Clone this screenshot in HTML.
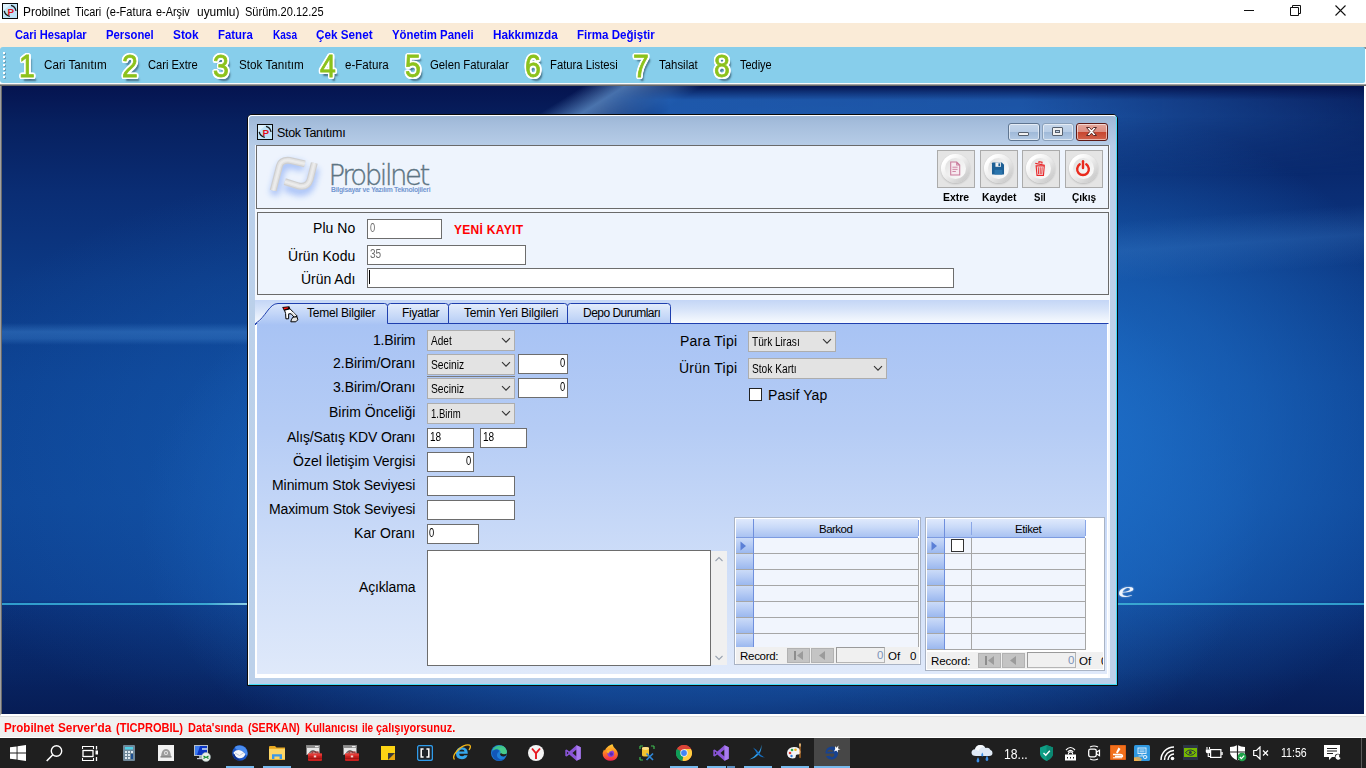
<!DOCTYPE html>
<html lang="tr"><head><meta charset="utf-8"><title>Probilnet Ticari</title>
<style>
*{box-sizing:border-box;margin:0;padding:0}
html,body{width:1366px;height:768px;overflow:hidden;background:#0d3f8f;font-family:"Liberation Sans",sans-serif;}
body{position:relative}
.a{position:absolute}
.t{position:absolute;white-space:nowrap;line-height:normal;font-family:"Liberation Sans",sans-serif}
#titlebar{left:0;top:0;width:1366px;height:23px;background:#fff}
#menubar{left:0;top:23px;width:1366px;height:24px;background:#faebd7}
#toolbar{left:0;top:47px;width:1365px;height:36px;background:#87ceeb;border-radius:3px 2px 2px 3px}
#tbbg2{left:1356px;top:47px;width:10px;height:36px;background:linear-gradient(#8c8c8c 0,#8c8c8c 2px,#fff 2px)}
#tbunder{z-index:2;left:0;top:83px;width:1366px;height:3px;background:linear-gradient(#fbfbfb 0,#fbfbfb 1px,#a0a0a0 1px,#a0a0a0 2px,#696969 2px)}
#tbbg{left:0;top:47px;width:10px;height:36px;background:linear-gradient(#faebd7 50%,#fff 50%)}
#mdi{left:0;top:83px;width:1366px;height:633px;overflow:hidden;border:1px solid #a0a0a0;border-top:0;border-right:2px solid #fff;border-bottom:2px solid #fff;
 background:
 radial-gradient(ellipse 400px 330px at 1050px 350px, rgba(30,112,202,.95), rgba(30,112,202,.55) 50%, rgba(30,112,202,0) 100%),
 radial-gradient(ellipse 560px 330px at 700px 440px, rgba(28,102,192,.95), rgba(28,102,192,.8) 55%, rgba(28,102,192,0) 100%),
 radial-gradient(ellipse 520px 300px at 420px 380px, rgba(22,92,178,.8), rgba(22,92,178,0) 100%),
 linear-gradient(180deg,#051450 0,#051450 3px,#07205f 40px,#0a2d74 110px,#0c3a86 200px,#0d4292 300px,#0e4596 420px,#0d3f8e 517px,#0b347e 520px,#092a6c 580px,#08225c 632px)}
#statusbar{left:0;top:716px;width:1366px;height:22px;background:#f0f0f0;border-top:1px solid #dcdcdc;border-bottom:1px solid #fff}
#taskbar{left:0;top:738px;width:1366px;height:30px;background:#1f1f1f}
.num{position:absolute;font-weight:normal;font-size:31.5px;line-height:36px;top:48px;transform:scaleX(.9);color:#8cc21c;width:24px;text-align:center;
 -webkit-text-stroke:.8px #8cc21c;
 text-shadow:-2px 0 #fff,2px 0 #fff,0 -2px #fff,0 2px #fff,-1.5px -1.5px #fff,1.5px -1.5px #fff,-1.5px 1.5px #fff,1.5px 1.5px #fff,-2px 1px #fff,2px 1px #fff,-2px -1px #fff,2px -1px #fff,1px 2px #fff,-1px 2px #fff,1px -2px #fff,-1px -2px #fff,3px 4px 2px rgba(40,70,90,.7)}
/* inner window */
#win{left:247px;top:114px;width:871px;height:572px;border:1px solid #0a0a0a;border-radius:5px 5px 0 0;
 background:linear-gradient(180deg,#9cb6d6 0,#a8c0de 12px,#b6cce7 30px,#bbd0ea 60px,#bcd1ea 100%)}
#win .inner{position:absolute;left:0;top:0;right:0;bottom:0;border:1px solid #fff;border-right-color:#45dcf6;border-bottom-color:#45dcf6;border-radius:4px 4px 0 0}
#client{left:255px;top:145px;width:855px;height:533px;background:#f4f8fe}
.cap{position:absolute;top:123px;width:32px;height:18px;border:1px solid #5f7590;border-radius:3px;
 background:linear-gradient(180deg,#c5d6ea 0,#b9cde6 48%,#9fb9d8 52%,#b4cae4 100%);box-shadow:inset 0 0 0 1px rgba(255,255,255,.55)}
.cap.close{border-color:#5e1a16;background:linear-gradient(180deg,#e5a79c 0,#dc8f83 48%,#c7452f 52%,#d2634c 100%)}
.panel{position:absolute;border:1px solid #6a6a6a;background:#eef4fd}
.tb{position:absolute;background:#fff;border:1px solid #6d6d6d;box-shadow:inset 0 0 0 0 #000}
.cb{position:absolute;background:#e3e3e3;border:1px solid #adadad;}
.cb svg{position:absolute;right:3px;top:6px}
.ibtn{position:absolute;top:150px;width:38px;height:38px;background:#e4e4e4;border:1px solid #ababab}
.ibtn .c{position:absolute;left:3px;top:3px;width:29px;height:29px;border-radius:50%;
 background:linear-gradient(135deg,#fff 18%,#ececec 50%,#c6c6c6 92%);box-shadow:0 1px 2px rgba(0,0,0,.18)}
.ibtn .c::after{content:"";position:absolute;left:4px;top:4px;width:21px;height:21px;border-radius:50%;
 background:linear-gradient(135deg,#dedede 5%,#efefef 45%,#fbfbfb 95%)}
.ibtn svg{position:absolute;left:-1px;top:0}
.grid{position:absolute;background:#fff;border:1px solid #a9b3c4}

</style></head>
<body>
<div class="a" id="titlebar"></div>
<svg class="a" style="left:2px;top:3px" width="16" height="16" viewBox="0 0 16 16"><rect x="0.500" y="0.500" width="15" height="15" fill="#bfe3f7" stroke="#0a0a0a"/><path d="M1 1 H9 L1 8z" fill="#e6f4fc" opacity=".8"/><path d="M2.300 7.800 Q2.800 11.800 7.800 13.300" fill="none" stroke="#1a1a1a" stroke-width="1.300"/><path d="M9 2.300 Q13.300 3.200 14 8" fill="none" stroke="#1a1a1a" stroke-width="1.300"/><text x="5.600" y="11.600" font-family="Liberation Sans, sans-serif" font-weight="bold" font-size="9.800" fill="#e0121a">P</text></svg>
<span class="t" style="left:23.2px;top:4.69px;font-size:12.5px;color:#000;transform-origin:0 0;transform:scaleX(0.9505);">Probilnet</span>
<span class="t" style="left:74.7px;top:4.69px;font-size:12.5px;color:#000;transform-origin:0 0;transform:scaleX(0.8739);">Ticari</span>
<span class="t" style="left:105.8px;top:4.69px;font-size:12.5px;color:#000;transform-origin:0 0;transform:scaleX(0.8890);">(e-Fatura</span>
<span class="t" style="left:156.3px;top:4.69px;font-size:12.5px;color:#000;transform-origin:0 0;transform:scaleX(0.8688);">e-Arşiv</span>
<span class="t" style="left:196.6px;top:4.69px;font-size:12.5px;color:#000;transform-origin:0 0;transform:scaleX(0.9557);">uyumlu)</span>
<span class="t" style="left:244.6px;top:4.69px;font-size:12.5px;color:#000;transform-origin:0 0;transform:scaleX(0.8836);">Sürüm.20.12.25</span>
<svg class="a" style="left:1230px;top:0" width="136" height="23" viewBox="0 0 136 23"><path d="M14 10.5 H24" stroke="#111" stroke-width="1"/><path d="M60.5 7.5 h8 v8 h-8 z M62.5 7.5 v-2 h8 v8 h-2" fill="none" stroke="#111" stroke-width="1"/><path d="M105.5 5.5 l10 10 M115.5 5.5 l-10 10" stroke="#111" stroke-width="1.1"/></svg>
<div class="a" id="menubar"></div>
<span class="t" style="left:15px;top:27.69px;font-size:12.5px;color:#0000ff;font-weight:bold;transform-origin:0 0;transform:scaleX(0.8895);">Cari Hesaplar</span>
<span class="t" style="left:106px;top:27.69px;font-size:12.5px;color:#0000ff;font-weight:bold;transform-origin:0 0;transform:scaleX(0.9032);">Personel</span>
<span class="t" style="left:173px;top:27.69px;font-size:12.5px;color:#0000ff;font-weight:bold;transform-origin:0 0;transform:scaleX(0.9486);">Stok</span>
<span class="t" style="left:218px;top:27.69px;font-size:12.5px;color:#0000ff;font-weight:bold;transform-origin:0 0;transform:scaleX(0.9083);">Fatura</span>
<span class="t" style="left:272.7px;top:27.69px;font-size:12.5px;color:#0000ff;font-weight:bold;transform-origin:0 0;transform:scaleX(0.8029);">Kasa</span>
<span class="t" style="left:316px;top:27.69px;font-size:12.5px;color:#0000ff;font-weight:bold;transform-origin:0 0;transform:scaleX(0.9379);">Çek Senet</span>
<span class="t" style="left:392px;top:27.69px;font-size:12.5px;color:#0000ff;font-weight:bold;transform-origin:0 0;transform:scaleX(0.9117);">Yönetim Paneli</span>
<span class="t" style="left:493px;top:27.69px;font-size:12.5px;color:#0000ff;font-weight:bold;transform-origin:0 0;transform:scaleX(0.9407);">Hakkımızda</span>
<span class="t" style="left:577px;top:27.69px;font-size:12.5px;color:#0000ff;font-weight:bold;transform-origin:0 0;transform:scaleX(0.9243);">Firma Değiştir</span>
<div class="a" id="tbbg"></div><div class="a" id="tbbg2"></div><div class="a" id="toolbar"></div>
<svg class="a" style="left:3px;top:52px" width="3" height="28" viewBox="0 0 3 28"><rect x="1" y="1" width="2" height="2" fill="#6b9fb8"/><rect x="0" y="0" width="2" height="2" fill="#fdfdfd"/><rect x="1" y="5" width="2" height="2" fill="#6b9fb8"/><rect x="0" y="4" width="2" height="2" fill="#fdfdfd"/><rect x="1" y="9" width="2" height="2" fill="#6b9fb8"/><rect x="0" y="8" width="2" height="2" fill="#fdfdfd"/><rect x="1" y="13" width="2" height="2" fill="#6b9fb8"/><rect x="0" y="12" width="2" height="2" fill="#fdfdfd"/><rect x="1" y="17" width="2" height="2" fill="#6b9fb8"/><rect x="0" y="16" width="2" height="2" fill="#fdfdfd"/><rect x="1" y="21" width="2" height="2" fill="#6b9fb8"/><rect x="0" y="20" width="2" height="2" fill="#fdfdfd"/><rect x="1" y="25" width="2" height="2" fill="#6b9fb8"/><rect x="0" y="24" width="2" height="2" fill="#fdfdfd"/></svg>
<span class="num" style="left:14.5px">1</span>
<span class="t" style="left:44px;top:57.69px;font-size:12.5px;color:#000;transform-origin:0 0;transform:scaleX(0.9336);">Cari Tanıtım</span>
<span class="num" style="left:118px">2</span>
<span class="t" style="left:148px;top:57.69px;font-size:12.5px;color:#000;transform-origin:0 0;transform:scaleX(0.8942);">Cari Extre</span>
<span class="num" style="left:209px">3</span>
<span class="t" style="left:239px;top:57.69px;font-size:12.5px;color:#000;transform-origin:0 0;transform:scaleX(0.9343);">Stok Tanıtım</span>
<span class="num" style="left:315.5px">4</span>
<span class="t" style="left:345px;top:57.69px;font-size:12.5px;color:#000;transform-origin:0 0;transform:scaleX(0.9249);">e-Fatura</span>
<span class="num" style="left:400.5px">5</span>
<span class="t" style="left:430px;top:57.69px;font-size:12.5px;color:#000;transform-origin:0 0;transform:scaleX(0.9061);">Gelen Faturalar</span>
<span class="num" style="left:520.5px">6</span>
<span class="t" style="left:550px;top:57.69px;font-size:12.5px;color:#000;transform-origin:0 0;transform:scaleX(0.9023);">Fatura Listesi</span>
<span class="num" style="left:629px">7</span>
<span class="t" style="left:659px;top:57.69px;font-size:12.5px;color:#000;transform-origin:0 0;transform:scaleX(0.9129);">Tahsilat</span>
<span class="num" style="left:709.5px">8</span>
<span class="t" style="left:740px;top:57.69px;font-size:12.5px;color:#000;transform-origin:0 0;transform:scaleX(0.8771);">Tediye</span>
<div class="a" id="tbunder"></div>
<div class="a" id="mdi"><div class="a" style="left:0;top:0;width:1px;height:632px;background:#696969"></div><div class="a" style="left:555px;top:-40px;width:120px;height:120px;background:linear-gradient(90deg,rgba(120,175,230,0),rgba(120,175,230,.6) 35%,rgba(120,175,230,.4) 60%,rgba(120,175,230,.25) 80%,rgba(120,175,230,0));transform:skewX(-58deg)"></div><div class="a" style="left:600px;top:3px;width:765px;height:90px;background:linear-gradient(90deg,rgba(36,104,192,0),rgba(36,104,192,.8) 9%,rgba(36,104,192,.75) 55%,rgba(36,104,192,.15) 100%);-webkit-mask-image:linear-gradient(180deg,transparent 0,#000 14px,#000 30px,transparent 90px);mask-image:linear-gradient(180deg,transparent 0,#000 14px,#000 30px,transparent 90px)"></div><div class="a" style="left:1px;top:522px;width:1364px;height:110px;background:linear-gradient(180deg,rgba(5,20,75,.10),rgba(5,20,75,.18) 60%,rgba(5,20,75,.4))"></div><div class="a" style="left:1px;top:520px;width:1364px;height:2px;background:linear-gradient(90deg,#2f9ccc,#3aa8d2 15%,#8fd0e8 18%,#3aa8d2 30%,#3aa8d2 80%,#2f9ccc)"></div><div class="a" style="left:1px;top:240px;width:260px;height:22px;background:linear-gradient(180deg,rgba(60,125,200,0),rgba(60,125,200,.5) 40%,rgba(60,125,200,.4) 70%,rgba(60,125,200,0))"></div><div class="a" style="left:1110px;top:130px;width:256px;height:60px;background:linear-gradient(180deg,rgba(60,125,200,0),rgba(60,125,200,.3) 50%,rgba(60,125,200,0));transform:skewY(-4deg)"></div></div>
<span class="t" style="left:1117.5px;top:579.18px;font-size:20px;color:#f2f6fc;font-style:italic;font-family:'Liberation Serif', serif;transform-origin:0 0;transform:scaleX(1.8221);text-shadow:0 0 1.5px rgba(255,255,255,.7);">e</span>
<div class="a" id="statusbar"></div>
<span class="t" style="left:4px;top:720.24px;font-size:13px;color:#ff0000;font-weight:bold;transform-origin:0 0;transform:scaleX(0.8910);">Probilnet</span>
<span class="t" style="left:58.2px;top:720.24px;font-size:13px;color:#ff0000;font-weight:bold;transform-origin:0 0;transform:scaleX(0.9072);">Server'da</span>
<span class="t" style="left:116.2px;top:720.24px;font-size:13px;color:#ff0000;font-weight:bold;transform-origin:0 0;transform:scaleX(0.8511);">(TICPROBIL)</span>
<span class="t" style="left:187.5px;top:720.24px;font-size:13px;color:#ff0000;font-weight:bold;transform-origin:0 0;transform:scaleX(0.8462);">Data'sında</span>
<span class="t" style="left:247.5px;top:720.24px;font-size:13px;color:#ff0000;font-weight:bold;transform-origin:0 0;transform:scaleX(0.8165);">(SERKAN)</span>
<span class="t" style="left:304.7px;top:720.24px;font-size:13px;color:#ff0000;font-weight:bold;transform-origin:0 0;transform:scaleX(0.8150);">Kullanıcısı</span>
<span class="t" style="left:361.5px;top:720.24px;font-size:13px;color:#ff0000;font-weight:bold;transform-origin:0 0;transform:scaleX(0.7741);">ile</span>
<span class="t" style="left:376px;top:720.24px;font-size:13px;color:#ff0000;font-weight:bold;transform-origin:0 0;transform:scaleX(0.8433);">çalışıyorsunuz.</span><div class="a" id="win"><div class="inner"></div></div>
<svg class="a" style="left:257px;top:124px" width="16" height="16" viewBox="0 0 16 16"><rect x="0.500" y="0.500" width="15" height="15" fill="#bfe3f7" stroke="#0a0a0a"/><path d="M1 1 H9 L1 8z" fill="#e6f4fc" opacity=".8"/><path d="M2.300 7.800 Q2.800 11.800 7.800 13.300" fill="none" stroke="#1a1a1a" stroke-width="1.300"/><path d="M9 2.300 Q13.300 3.200 14 8" fill="none" stroke="#1a1a1a" stroke-width="1.300"/><text x="5.600" y="11.600" font-family="Liberation Sans, sans-serif" font-weight="bold" font-size="9.800" fill="#e0121a">P</text></svg>
<span class="t" style="left:277px;top:125.69px;font-size:12.5px;color:#000;letter-spacing:-0.340px;">Stok Tanıtımı</span>
<div class="cap" style="left:1008px"><div class="a" style="left:9px;top:8px;width:11px;height:4px;background:#f2f2f2;border:1px solid #56606e;border-radius:1px"></div></div>
<div class="cap" style="left:1042px;border-color:#8aa0ba"><div class="a" style="left:9px;top:3px;width:11px;height:9px;background:#f0f0f0;border:1px solid #56606e;border-radius:1px"><div class="a" style="left:2px;top:2px;width:5px;height:3px;border:1px solid #56606e;background:#c4d4e8"></div></div></div>
<div class="cap close" style="left:1076px"><svg class="a" style="left:8px;top:2px" width="13" height="11" viewBox="0 0 13 11"><path d="M1.5 1.5 h3 l2 2.3 l2-2.3 h3 l-3.4 4 l3.4 4 h-3 l-2-2.3 l-2 2.3 h-3 l3.4-4 z" fill="#fff" stroke="#5a2a26" stroke-width="1"/></svg></div>
<div class="a" id="client"></div>
<div class="panel" style="left:256px;top:145px;width:853px;height:64px;background:#eef4fd"></div>
<svg class="a" style="left:262px;top:150px" width="70" height="56" viewBox="0 0 70 56"><defs><filter id="bl" x="-30%" y="-30%" width="160%" height="160%"><feGaussianBlur stdDeviation="3.2"/></filter></defs><g filter="url(#bl)" opacity=".95" fill="none" stroke="#a6c0f7" stroke-width="9"><path d="M12 45 L18 22 Q20 14 29 14 L42 17"/><path d="M23 37 L37 41.500 Q46 42 49 33 L53 18"/></g><g fill="none" stroke="#cfcfcf" stroke-width="7"><path d="M11.200 40.500 L17.600 15.500 Q19.500 9.500 27.800 10.400 L42.800 13.800"/><path d="M22.800 31.600 L36.800 36 Q45.500 37.800 48.200 29.500 L52.300 13"/></g><g fill="none" stroke="#e2e2e2" stroke-width="4.600"><path d="M11.200 40.500 L17.600 15.500 Q19.500 9.500 27.800 10.400 L42.800 13.800"/><path d="M22.800 31.600 L36.800 36 Q45.500 37.800 48.200 29.500 L52.300 13"/></g><g fill="none" stroke="#ececec" stroke-width="2"><path d="M11.200 40.500 L17.600 15.500 Q19.500 9.500 27.800 10.400 L42.800 13.800"/><path d="M22.800 31.600 L36.800 36 Q45.500 37.800 48.200 29.500 L52.300 13"/></g></svg>
<span class="t" style="left:328.5px;top:159.48px;font-size:27.5px;color:#5d7483;font-family:'DejaVu Sans Light','DejaVu Sans',sans-serif;letter-spacing:-2.467px;font-weight:200;-webkit-text-stroke:.35px #5d7483;">Probilnet</span>
<span class="t" style="left:331px;top:185.85px;font-size:6.8px;color:#7396d0;font-weight:bold;letter-spacing:-0.253px;">Bilgisayar ve Yazılım Teknolojileri</span>
<div class="ibtn" style="left:937px"><div class="c"></div><svg width="36" height="36" viewBox="0 0 36 36"><g transform="translate(18 17.500) scale(.86) translate(-18 -18)"><path d="M13 10.5 h7 l3.5 3.5 v11.5 h-10.500 z M20 10.5 v3.500 h3.500" fill="#f6e9ef" stroke="#c9799a" stroke-width="1.200"/><path d="M15 16.500 h6 M15 19 h6 M15 21.500 h4" stroke="#c9799a" stroke-width="1"/></g></svg></div>
<div class="ibtn" style="left:980px"><div class="c"></div><svg width="36" height="36" viewBox="0 0 36 36"><g transform="translate(18 17.500) scale(.86) translate(-18 -18)"><path d="M12 11 h10.500 l2.500 2.500 v10.500 a1 1 0 0 1 -1 1 h-12 a1 1 0 0 1 -1 -1 v-12 a1 1 0 0 1 1 -1 z" fill="#1d5f95"/><rect x="15" y="11" width="6.500" height="5" fill="#f2f2f2"/><rect x="18.500" y="12" width="2" height="3.200" fill="#1d5f95"/><rect x="14" y="19.500" width="9" height="5.500" fill="#2b75ad"/></g></svg></div>
<div class="ibtn" style="left:1022px"><div class="c"></div><svg width="36" height="36" viewBox="0 0 36 36"><g transform="translate(18 17.500) scale(.86) translate(-18 -18)"><path d="M13.500 15 h9.500 l-1 11 h-7.500 z" fill="none" stroke="#e8272a" stroke-width="1.300"/><path d="M16 16.500 l.4 8 M18.250 16.500 v8 M20.500 16.500 l-.4 8" stroke="#e8272a" stroke-width="1.100"/><path d="M12.500 12 l11 2.200 M16.500 11.600 l.4-1.600 l3.500 .7 l-.3 1.600" fill="none" stroke="#e8272a" stroke-width="1.300"/></g></svg></div>
<div class="ibtn" style="left:1065px"><div class="c"></div><svg width="36" height="36" viewBox="0 0 36 36"><g transform="translate(18 17.500) scale(.86) translate(-18 -18)"><path d="M14.200 13.200 a6.800 6.800 0 1 0 7.600 0" fill="none" stroke="#ea2a1d" stroke-width="2.800" stroke-linecap="round"/><path d="M18 9.500 v8" stroke="#ea2a1d" stroke-width="2.800" stroke-linecap="round"/></g></svg></div>
<span class="t" style="left:942.5px;top:191.04px;font-size:11px;color:#000;font-weight:bold;transform-origin:0 0;transform:scaleX(0.9516);">Extre</span>
<span class="t" style="left:981.6px;top:191.04px;font-size:11px;color:#000;font-weight:bold;transform-origin:0 0;transform:scaleX(0.9404);">Kaydet</span>
<span class="t" style="left:1034px;top:191.04px;font-size:11px;color:#000;font-weight:bold;transform-origin:0 0;transform:scaleX(0.8697);">Sil</span>
<span class="t" style="left:1072px;top:191.04px;font-size:11px;color:#000;font-weight:bold;transform-origin:0 0;transform:scaleX(0.9203);">Çıkış</span>
<div class="panel" style="left:257px;top:212px;width:852px;height:83px"></div>
<span class="t" style="left:313px;top:220.33px;font-size:14px;color:#000;letter-spacing:0.045px;">Plu No</span>
<span class="t" style="left:288px;top:248.33px;font-size:14px;color:#000;letter-spacing:0.040px;">Ürün Kodu</span>
<span class="t" style="left:301px;top:271.33px;font-size:14px;color:#000;letter-spacing:-0.023px;">Ürün Adı</span>
<div class="tb" style="left:367px;top:219px;width:75px;height:20px"></div>
<div class="tb" style="left:367px;top:245px;width:159px;height:20px"></div>
<div class="tb" style="left:367px;top:268px;width:587px;height:20px"></div>
<div class="a" style="left:369px;top:270px;width:1px;height:14px;background:#000"></div>
<span class="t" style="left:369.5px;top:220.69px;font-size:12.5px;color:#6d6d6d;transform-origin:0 0;transform:scaleX(0.7479);">0</span>
<span class="t" style="left:369.5px;top:246.69px;font-size:12.5px;color:#6d6d6d;transform-origin:0 0;transform:scaleX(0.8054);">35</span>
<span class="t" style="left:454px;top:223.14px;font-size:12px;color:#ff0000;font-weight:bold;letter-spacing:0.305px;">YENİ KAYIT</span>
<div class="a" style="left:255px;top:300px;width:854px;height:23px;background:linear-gradient(180deg,#c4d6f6 0,#d6e3f9 40%,#eaf1fc 75%,#f7fafe 100%)"></div>
<div class="a" style="left:255px;top:324px;width:853px;height:354px;background:#fff"></div>
<div class="a" style="left:257px;top:324px;width:850px;height:350px;background:linear-gradient(180deg,#a8c3f4 0,#b5ccf5 30%,#cfdef8 70%,#dfe9fa 100%)"></div>
<svg class="a" style="left:255px;top:300px" width="854" height="26" viewBox="0 0 854 26"><defs><linearGradient id="tg" x1="0" y1="0" x2="0" y2="1"><stop offset="0" stop-color="#e4edfc"/><stop offset="1" stop-color="#b6cdf5"/></linearGradient><linearGradient id="ta" x1="0" y1="0" x2="0" y2="1"><stop offset="0" stop-color="#dae6fb"/><stop offset="1" stop-color="#a8c3f4"/></linearGradient></defs><path d="M0.500 23.500 H853.500" stroke="#1f3fae" stroke-width="1"/><path d="M132.500 23.500 V6.500 q0-3 3-3 H190.500 q3 0 3 3 V23.500 z" fill="url(#tg)" stroke="#1f3fae"/><path d="M193.500 23.500 V6.500 q0-3 3-3 H309.500 q3 0 3 3 V23.500 z" fill="url(#tg)" stroke="#1f3fae"/><path d="M312.500 23.500 V6.500 q0-3 3-3 H412.500 q3 0 3 3 V23.500 z" fill="url(#tg)" stroke="#1f3fae"/><path d="M1.500 25 L2 23.500 C11 17 14 3.500 23 3.500 H129.500 q3 0 3 3 V25 z" fill="url(#ta)" stroke="none"/><path d="M0.500 25 V23.500 C11 17 14 3.500 23 3.500 H129.500 q3 0 3 3 V23.500" fill="none" stroke="#1f3fae"/></svg>
<svg class="a" style="left:281px;top:305px" width="18" height="18" viewBox="0 0 18 18"><path d="M3.500 5.200 L9 3.800 L16.300 11.200 L13.200 12.300 L10.200 8.800 L7.700 8.800 L7.600 13.800 L4.900 13.800 L4.600 8.500 Z" fill="#fff" stroke="#000" stroke-width="1"/><path d="M11.800 12.200 L16 11.800 L16.800 14.800 L14.800 16.800 L9.800 16.800 L10.300 14.800 Z" fill="#e4e4e4" stroke="#000" stroke-width="1"/><path d="M1.200 2 L8.300 1.200 L9.400 3.800 L2.800 5.600 Z" fill="#000"/><path d="M2.200 2.800 L7.200 2.200 L7.200 3.300 L3.200 4.400 Z" fill="#ff1a10"/><path d="M10.500 7.500 L13.500 11 M12 6.800 L15 10.500" stroke="#bbb" stroke-width=".6"/></svg>
<span class="t" style="left:307px;top:306.14px;font-size:12px;color:#000;letter-spacing:-0.219px;">Temel Bilgiler</span>
<span class="t" style="left:402px;top:306.14px;font-size:12px;color:#000;letter-spacing:-0.255px;">Fiyatlar</span>
<span class="t" style="left:464px;top:306.14px;font-size:12px;color:#000;letter-spacing:-0.155px;">Temin Yeri Bilgileri</span>
<span class="t" style="left:583px;top:306.14px;font-size:12px;color:#000;letter-spacing:-0.529px;">Depo Durumları</span>
<span class="t" style="left:373px;top:332.33px;font-size:14px;color:#000;letter-spacing:-0.180px;">1.Birim</span>
<span class="t" style="left:333px;top:355.33px;font-size:14px;color:#000;letter-spacing:-0.013px;">2.Birim/Oranı</span>
<span class="t" style="left:333px;top:379.33px;font-size:14px;color:#000;letter-spacing:-0.013px;">3.Birim/Oranı</span>
<span class="t" style="left:329px;top:404.33px;font-size:14px;color:#000;letter-spacing:-0.004px;">Birim Önceliği</span>
<span class="t" style="left:287px;top:429.33px;font-size:14px;color:#000;letter-spacing:-0.121px;">Alış/Satış KDV Oranı</span>
<span class="t" style="left:293px;top:453.33px;font-size:14px;color:#000;letter-spacing:0.007px;">Özel İletişim Vergisi</span>
<span class="t" style="left:272px;top:477.33px;font-size:14px;color:#000;letter-spacing:-0.067px;">Minimum Stok Seviyesi</span>
<span class="t" style="left:269px;top:501.33px;font-size:14px;color:#000;letter-spacing:-0.109px;">Maximum Stok Seviyesi</span>
<span class="t" style="left:354px;top:525.33px;font-size:14px;color:#000;letter-spacing:0.066px;">Kar Oranı</span>
<span class="t" style="left:359px;top:579.33px;font-size:14px;color:#000;letter-spacing:-0.160px;">Açıklama</span>
<div class="cb" style="left:427px;top:330px;width:88px;height:21px"><svg width="10" height="7" viewBox="0 0 10 7"><path d="M1 1.200 L5 5.200 L9 1.200" fill="none" stroke="#333" stroke-width="1.100"/></svg></div><span class="t" style="left:431px;top:333.69px;font-size:12.5px;color:#000;transform-origin:0 0;transform:scaleX(0.8049);">Adet</span>
<div class="cb" style="left:427px;top:354px;width:88px;height:21px"><svg width="10" height="7" viewBox="0 0 10 7"><path d="M1 1.200 L5 5.200 L9 1.200" fill="none" stroke="#333" stroke-width="1.100"/></svg></div><span class="t" style="left:431px;top:357.69px;font-size:12.5px;color:#000;transform-origin:0 0;transform:scaleX(0.8239);">Seciniz</span>
<div class="a" style="left:427px;top:376px;width:88px;height:1px;background:#7a7a7a"></div>
<div class="cb" style="left:427px;top:378px;width:88px;height:21px"><svg width="10" height="7" viewBox="0 0 10 7"><path d="M1 1.200 L5 5.200 L9 1.200" fill="none" stroke="#333" stroke-width="1.100"/></svg></div><span class="t" style="left:431px;top:381.69px;font-size:12.5px;color:#000;transform-origin:0 0;transform:scaleX(0.8239);">Seciniz</span>
<div class="cb" style="left:427px;top:403px;width:88px;height:21px"><svg width="10" height="7" viewBox="0 0 10 7"><path d="M1 1.200 L5 5.200 L9 1.200" fill="none" stroke="#333" stroke-width="1.100"/></svg></div><span class="t" style="left:431px;top:406.69px;font-size:12.5px;color:#000;transform-origin:0 0;transform:scaleX(0.7634);">1.Birim</span>
<div class="tb" style="left:518px;top:354px;width:50px;height:20px"></div>
<div class="tb" style="left:518px;top:378px;width:50px;height:20px"></div>
<span class="t" style="left:560px;top:355.69px;font-size:12.5px;color:#000;transform-origin:0 0;transform:scaleX(0.7479);">0</span>
<span class="t" style="left:560px;top:379.69px;font-size:12.5px;color:#000;transform-origin:0 0;transform:scaleX(0.7479);">0</span>
<div class="tb" style="left:427px;top:428px;width:47px;height:20px"></div>
<div class="tb" style="left:480px;top:428px;width:47px;height:20px"></div>
<span class="t" style="left:429.5px;top:429.69px;font-size:12.5px;color:#000;transform-origin:0 0;transform:scaleX(0.8054);">18</span>
<span class="t" style="left:482.5px;top:429.69px;font-size:12.5px;color:#000;transform-origin:0 0;transform:scaleX(0.8054);">18</span>
<div class="tb" style="left:427px;top:452px;width:47px;height:20px"></div>
<span class="t" style="left:465.5px;top:453.69px;font-size:12.5px;color:#000;transform-origin:0 0;transform:scaleX(0.7479);">0</span>
<div class="tb" style="left:427px;top:476px;width:88px;height:20px"></div>
<div class="tb" style="left:427px;top:500px;width:88px;height:20px"></div>
<div class="tb" style="left:427px;top:524px;width:52px;height:20px"></div>
<span class="t" style="left:429px;top:525.69px;font-size:12.5px;color:#000;transform-origin:0 0;transform:scaleX(0.7479);">0</span>
<div class="tb" style="left:427px;top:550px;width:284px;height:116px"></div>
<div class="a" style="left:711px;top:551px;width:16px;height:114px;background:#f0f0f0"></div>
<svg class="a" style="left:714px;top:555px" width="10" height="108" viewBox="0 0 10 108"><path d="M1.500 6 L5 2.500 L8.500 6 M1.500 101 L5 104.500 L8.500 101" fill="none" stroke="#9aa3b0" stroke-width="1.100"/></svg>
<span class="t" style="left:680px;top:333.33px;font-size:14px;color:#000;letter-spacing:0.228px;">Para Tipi</span>
<span class="t" style="left:679px;top:360.33px;font-size:14px;color:#000;letter-spacing:0.252px;">Ürün Tipi</span>
<div class="cb" style="left:748px;top:331px;width:88px;height:21px"><svg width="10" height="7" viewBox="0 0 10 7"><path d="M1 1.200 L5 5.200 L9 1.200" fill="none" stroke="#333" stroke-width="1.100"/></svg></div><span class="t" style="left:752px;top:334.69px;font-size:12.5px;color:#000;transform-origin:0 0;transform:scaleX(0.8078);">Türk Lirası</span>
<div class="cb" style="left:748px;top:358px;width:139px;height:21px"><svg width="10" height="7" viewBox="0 0 10 7"><path d="M1 1.200 L5 5.200 L9 1.200" fill="none" stroke="#333" stroke-width="1.100"/></svg></div><span class="t" style="left:752px;top:361.69px;font-size:12.5px;color:#000;transform-origin:0 0;transform:scaleX(0.8143);">Stok Kartı</span>
<div class="a" style="left:749px;top:388px;width:13px;height:13px;background:#fff;border:1px solid #222"></div>
<span class="t" style="left:768px;top:387.33px;font-size:14px;color:#000;letter-spacing:0.073px;">Pasif Yap</span>
<div class="grid" style="left:734px;top:517px;width:187px;height:148px"></div><div class="a" style="left:736px;top:519px;width:182px;height:19px;background:linear-gradient(180deg,#dfe9fc 0,#c9daf8 45%,#a9c2f2 100%);border-bottom:1px solid #7d9be0"></div><div class="a" style="left:736px;top:538px;width:182px;height:109px;background:#f1f5fd"></div><div class="a" style="left:736px;top:538px;width:17px;height:15px;background:linear-gradient(180deg,#cbdbf8 0,#b4caf4 50%,#9bb8ef 100%)"></div><div class="a" style="left:736px;top:553px;width:182px;height:1px;background:#a6a6a6"></div><div class="a" style="left:736px;top:554px;width:17px;height:15px;background:linear-gradient(180deg,#cbdbf8 0,#b4caf4 50%,#9bb8ef 100%)"></div><div class="a" style="left:736px;top:569px;width:182px;height:1px;background:#a6a6a6"></div><div class="a" style="left:736px;top:570px;width:17px;height:15px;background:linear-gradient(180deg,#cbdbf8 0,#b4caf4 50%,#9bb8ef 100%)"></div><div class="a" style="left:736px;top:585px;width:182px;height:1px;background:#a6a6a6"></div><div class="a" style="left:736px;top:586px;width:17px;height:15px;background:linear-gradient(180deg,#cbdbf8 0,#b4caf4 50%,#9bb8ef 100%)"></div><div class="a" style="left:736px;top:601px;width:182px;height:1px;background:#a6a6a6"></div><div class="a" style="left:736px;top:602px;width:17px;height:15px;background:linear-gradient(180deg,#cbdbf8 0,#b4caf4 50%,#9bb8ef 100%)"></div><div class="a" style="left:736px;top:617px;width:182px;height:1px;background:#a6a6a6"></div><div class="a" style="left:736px;top:618px;width:17px;height:15px;background:linear-gradient(180deg,#cbdbf8 0,#b4caf4 50%,#9bb8ef 100%)"></div><div class="a" style="left:736px;top:633px;width:182px;height:1px;background:#a6a6a6"></div><div class="a" style="left:736px;top:634px;width:17px;height:13px;background:linear-gradient(180deg,#cbdbf8 0,#b4caf4 50%,#9bb8ef 100%)"></div><div class="a" style="left:753px;top:519px;width:1px;height:128px;background:#6f8fdd"></div><div class="a" style="left:918px;top:538px;width:1px;height:109px;background:#a6a6a6"></div><div class="a" style="left:918px;top:520px;width:1px;height:16px;background:#8aa6e6"></div><svg class="a" style="left:740px;top:541px" width="7" height="10" viewBox="0 0 7 10"><path d="M0.500 0.500 L6 5 L0.500 9.500 z" fill="#5b7fd6"/></svg><span class="t" style="left:819px;top:522.59px;font-size:11.5px;color:#000;letter-spacing:-0.523px;">Barkod</span><div class="a" style="left:736px;top:647px;width:183px;height:17px;background:#f0f0f0"></div>
<div class="grid" style="left:925px;top:517px;width:180px;height:154px"></div><div class="a" style="left:927px;top:519px;width:158px;height:19px;background:linear-gradient(180deg,#dfe9fc 0,#c9daf8 45%,#a9c2f2 100%);border-bottom:1px solid #7d9be0"></div><div class="a" style="left:927px;top:538px;width:158px;height:112px;background:#f1f5fd"></div><div class="a" style="left:927px;top:538px;width:17px;height:15px;background:linear-gradient(180deg,#cbdbf8 0,#b4caf4 50%,#9bb8ef 100%)"></div><div class="a" style="left:927px;top:553px;width:158px;height:1px;background:#a6a6a6"></div><div class="a" style="left:927px;top:554px;width:17px;height:15px;background:linear-gradient(180deg,#cbdbf8 0,#b4caf4 50%,#9bb8ef 100%)"></div><div class="a" style="left:927px;top:569px;width:158px;height:1px;background:#a6a6a6"></div><div class="a" style="left:927px;top:570px;width:17px;height:15px;background:linear-gradient(180deg,#cbdbf8 0,#b4caf4 50%,#9bb8ef 100%)"></div><div class="a" style="left:927px;top:585px;width:158px;height:1px;background:#a6a6a6"></div><div class="a" style="left:927px;top:586px;width:17px;height:15px;background:linear-gradient(180deg,#cbdbf8 0,#b4caf4 50%,#9bb8ef 100%)"></div><div class="a" style="left:927px;top:601px;width:158px;height:1px;background:#a6a6a6"></div><div class="a" style="left:927px;top:602px;width:17px;height:15px;background:linear-gradient(180deg,#cbdbf8 0,#b4caf4 50%,#9bb8ef 100%)"></div><div class="a" style="left:927px;top:617px;width:158px;height:1px;background:#a6a6a6"></div><div class="a" style="left:927px;top:618px;width:17px;height:15px;background:linear-gradient(180deg,#cbdbf8 0,#b4caf4 50%,#9bb8ef 100%)"></div><div class="a" style="left:927px;top:633px;width:158px;height:1px;background:#a6a6a6"></div><div class="a" style="left:927px;top:634px;width:17px;height:15px;background:linear-gradient(180deg,#cbdbf8 0,#b4caf4 50%,#9bb8ef 100%)"></div><div class="a" style="left:927px;top:649px;width:158px;height:1px;background:#a6a6a6"></div><div class="a" style="left:944px;top:519px;width:1px;height:131px;background:#6f8fdd"></div><div class="a" style="left:971px;top:538px;width:1px;height:112px;background:#a6a6a6"></div><div class="a" style="left:971px;top:522px;width:1px;height:13px;background:#8aa6e6"></div><div class="a" style="left:1085px;top:538px;width:1px;height:112px;background:#a6a6a6"></div><div class="a" style="left:1085px;top:520px;width:1px;height:16px;background:#8aa6e6"></div><svg class="a" style="left:931px;top:541px" width="7" height="10" viewBox="0 0 7 10"><path d="M0.500 0.500 L6 5 L0.500 9.500 z" fill="#5b7fd6"/></svg><span class="t" style="left:1015px;top:522.59px;font-size:11.5px;color:#000;letter-spacing:-0.411px;">Etiket</span><div class="a" style="left:927px;top:652px;width:176px;height:17px;background:#f0f0f0"></div>
<span class="t" style="left:740px;top:649.59px;font-size:11.5px;color:#000;letter-spacing:-0.283px;">Record:</span><div class="a" style="left:787px;top:648px;width:23px;height:15px;background:#c4c4c4;border:1px solid #b2b2b2"></div><div class="a" style="left:811px;top:648px;width:23px;height:15px;background:#c4c4c4;border:1px solid #b2b2b2"></div><svg class="a" style="left:787px;top:648px" width="23" height="15" viewBox="0 0 23 15"><rect x="7" y="3" width="2" height="9" fill="#8d8d8d"/><path d="M16 3 L10 7.500 L16 12 z" fill="#9b9b9b"/></svg><svg class="a" style="left:811px;top:648px" width="23" height="15" viewBox="0 0 23 15"><path d="M14 3 L8 7.500 L14 12 z" fill="#9b9b9b"/></svg><div class="a" style="left:836px;top:647px;width:49px;height:16px;background:#f0f0f0;border:1px solid #b5b5b5;border-top-color:#9a9a9a;border-left-color:#9a9a9a"></div><span class="t" style="left:877px;top:648.59px;font-size:11.5px;color:#7c93b8;">0</span><span class="t" style="left:888px;top:649.59px;font-size:11.5px;color:#000;letter-spacing:0.080px;">Of</span>
<span class="t" style="left:910px;top:649.59px;font-size:11.5px;color:#000;">0</span>
<span class="t" style="left:931px;top:654.59px;font-size:11.5px;color:#000;letter-spacing:-0.140px;">Record:</span><div class="a" style="left:978px;top:653px;width:23px;height:15px;background:#c4c4c4;border:1px solid #b2b2b2"></div><div class="a" style="left:1002px;top:653px;width:23px;height:15px;background:#c4c4c4;border:1px solid #b2b2b2"></div><svg class="a" style="left:978px;top:653px" width="23" height="15" viewBox="0 0 23 15"><rect x="7" y="3" width="2" height="9" fill="#8d8d8d"/><path d="M16 3 L10 7.500 L16 12 z" fill="#9b9b9b"/></svg><svg class="a" style="left:1002px;top:653px" width="23" height="15" viewBox="0 0 23 15"><path d="M14 3 L8 7.500 L14 12 z" fill="#9b9b9b"/></svg><div class="a" style="left:1027px;top:652px;width:49px;height:16px;background:#f0f0f0;border:1px solid #b5b5b5;border-top-color:#9a9a9a;border-left-color:#9a9a9a"></div><span class="t" style="left:1068px;top:653.59px;font-size:11.5px;color:#7c93b8;">0</span><span class="t" style="left:1079px;top:654.59px;font-size:11.5px;color:#000;letter-spacing:0.080px;">Of</span>
<div class="a" style="left:1100px;top:654px;width:3px;height:14px;overflow:hidden"><span style="position:absolute;left:1px;top:0.5px;font-size:11.5px">0</span></div>
<div class="a" style="left:951px;top:539px;width:13px;height:13px;background:#fff;border:1px solid #333"></div><div class="a" id="taskbar"></div>
<div class="a" style="left:814px;top:738px;width:36px;height:30px;background:#474747"></div>
<div class="a" style="left:226px;top:766px;width:28px;height:2px;background:#76b9ed"></div>
<div class="a" style="left:263px;top:766px;width:28px;height:2px;background:#76b9ed"></div>
<div class="a" style="left:670px;top:766px;width:28px;height:2px;background:#76b9ed"></div>
<div class="a" style="left:707px;top:766px;width:19px;height:2px;background:#76b9ed"></div>
<div class="a" style="left:744px;top:766px;width:28px;height:2px;background:#76b9ed"></div>
<div class="a" style="left:781px;top:766px;width:28px;height:2px;background:#76b9ed"></div>
<div class="a" style="left:814px;top:766px;width:36px;height:2px;background:#76b9ed"></div>
<div class="a" style="left:727px;top:766px;width:8px;height:2px;background:#5b8fc0"></div>
<svg class="a" style="left:10px;top:745px" width="16" height="16" viewBox="0 0 16 16"><path d="M0 2.300 L6.600 1.400 V7.600 H0 z M7.500 1.250 L16 0 V7.600 H7.500 z M0 8.400 H6.600 V14.600 L0 13.700 z M7.500 8.400 H16 V16 L7.500 14.750 z" fill="#fff"/></svg>
<svg class="a" style="left:46px;top:745px" width="17" height="17" viewBox="0 0 17 17"><circle cx="10.500" cy="6" r="5.200" fill="none" stroke="#fff" stroke-width="1.400"/><path d="M6.800 9.800 L0.700 16" stroke="#fff" stroke-width="1.600"/></svg>
<svg class="a" style="left:82px;top:746px" width="17" height="15" viewBox="0 0 17 15"><path d="M0.500 3 V0.500 H11.500 V3 M0.500 12 V14.500 H11.500 V12" fill="none" stroke="#fff" stroke-width="1.100"/><rect x="1" y="4.500" width="10" height="6" fill="none" stroke="#fff" stroke-width="1.300"/><path d="M14.500 0 V3.500 M14.500 11 V15" stroke="#fff" stroke-width="1.300"/><rect x="13.500" y="4.500" width="2.500" height="4" fill="#fff"/></svg>
<svg class="a" style="left:123px;top:745px" width="12" height="16" viewBox="0 0 12 16"><rect x="0" y="0" width="12" height="16" rx="1" fill="#6f8799"/><rect x="2" y="2" width="8" height="2.500" fill="#4fd0e8"/><g fill="#dfe9ef"><rect x="2" y="6" width="2" height="2"/><rect x="5" y="6" width="2" height="2"/><rect x="8" y="6" width="2" height="2"/><rect x="2" y="9" width="2" height="2"/><rect x="5" y="9" width="2" height="2"/><rect x="2" y="12" width="2" height="2"/><rect x="5" y="12" width="2" height="2"/></g><rect x="8" y="9" width="2" height="5" fill="#1d4f91"/></svg>
<svg class="a" style="left:158px;top:745px" width="16" height="16" viewBox="0 0 16 16"><rect width="16" height="16" fill="#f1f1f1"/><path d="M3 11.500 Q3.500 4 8 4 Q12.500 4 13 11.500 z" fill="#9c9c9c"/><rect x="2.500" y="11" width="11" height="1.600" fill="#8a8a8a"/><circle cx="8" cy="8" r="2" fill="#f1f1f1"/><path d="M8 6.800 v2.400 M6.800 8 h2.400" stroke="#8a8a8a" stroke-width=".9"/></svg>
<svg class="a" style="left:194px;top:745px" width="17" height="17" viewBox="0 0 17 17"><rect x="0.500" y="0.500" width="13" height="10" fill="#0b35c4" stroke="#b8c0c8" stroke-width="1"/><path d="M1 1 h5 l-3 9 h-2 z" fill="#3c7bf0"/><rect x="8" y="3" width="5" height="2" fill="#9db5e8"/><rect x="5" y="11" width="4" height="2" fill="#9aa"/><rect x="3" y="13" width="8" height="1.200" fill="#ccd"/><circle cx="12" cy="12" r="4.500" fill="#e9efe9" stroke="#9aa" stroke-width=".6"/><path d="M9.500 11 l2 1.200 l-2 1.200 M14.500 11 l-2 1.200 l2 1.200" fill="none" stroke="#168a2c" stroke-width="1.200"/></svg>
<svg class="a" style="left:232px;top:745px" width="16" height="16" viewBox="0 0 16 16"><circle cx="8" cy="8" r="7.800" fill="#1b56c6"/><path d="M3 1.800 Q8-1 13 2.500 Q16.500 6 15 11 Q12 6 7 5 Q3 5 3 1.800z" fill="#4a8df0"/><path d="M1.500 7.500 Q5 3.500 10 6 L13.500 9 Q12 13.500 7 13.200 Q2.500 12.500 1.500 7.500z" fill="#f4f6fa"/><path d="M3 8 L7.500 10.500 L12 7.500" fill="none" stroke="#b9c3d6" stroke-width=".9"/><path d="M0.500 10 Q3 16.500 10 15.300 Q4 14.500 2.500 9z" fill="#0d2f8a"/></svg>
<svg class="a" style="left:269px;top:746px" width="16" height="14" viewBox="0 0 16 14"><path d="M0 1 Q0 0 1 0 H6 L7.500 1.600 H16 V4 H0z" fill="#e8a820"/><rect x="0" y="2.800" width="16" height="11.200" fill="#fbd668"/><path d="M3 14 V8.200 H13 V14 H10.600 V10.400 H5.400 V14z" fill="#3b97e8"/><rect x="0" y="13" width="16" height="1" fill="#e0b13a"/></svg>
<svg class="a" style="left:306px;top:745px" width="16" height="16" viewBox="0 0 16 16"><rect x="0.500" y="0.500" width="13" height="9" fill="#e9e9e9" stroke="#7d7d7d"/><rect x="0.500" y="0.500" width="13" height="2.500" fill="#8e8e8e"/><rect x="9" y="1" width="3.500" height="1.200" fill="#eee"/><path d="M3.500 8 Q7 3.500 10.500 8" fill="none" stroke="#666" stroke-width="1.300"/><rect x="2" y="8.500" width="14" height="7.500" rx="1" fill="#c8201e"/><rect x="2" y="8.500" width="14" height="2.200" fill="#e23a36"/><path d="M6 8.500 V7 H12 V8.500" fill="none" stroke="#8c1010" stroke-width="1.100"/><rect x="7.800" y="10.500" width="2.400" height="2" fill="#f2d7d5"/><rect x="2" y="12.800" width="14" height=".8" fill="#8c1010"/></svg>
<svg class="a" style="left:343px;top:745px" width="16" height="16" viewBox="0 0 16 16"><rect x="0.500" y="0.500" width="13" height="9" fill="#e9e9e9" stroke="#7d7d7d"/><rect x="0.500" y="0.500" width="13" height="2.500" fill="#8e8e8e"/><rect x="9" y="1" width="3.500" height="1.200" fill="#eee"/><path d="M3.500 8 Q7 3.500 10.500 8" fill="none" stroke="#666" stroke-width="1.300"/><rect x="2" y="8.500" width="14" height="7.500" rx="1" fill="#c8201e"/><rect x="2" y="8.500" width="14" height="2.200" fill="#e23a36"/><path d="M6 8.500 V7 H12 V8.500" fill="none" stroke="#8c1010" stroke-width="1.100"/><rect x="7.800" y="10.500" width="2.400" height="2" fill="#f2d7d5"/><rect x="2" y="12.800" width="14" height=".8" fill="#8c1010"/></svg>
<svg class="a" style="left:381px;top:746px" width="14" height="14" viewBox="0 0 14 14"><rect width="14" height="14" fill="#fcd414"/><path d="M14 7 L7 14 H14z" fill="#e8a60e"/><path d="M14 7 L7 14 V7z" fill="#3a3a3a"/></svg>
<svg class="a" style="left:417px;top:745px" width="16" height="16" viewBox="0 0 16 16"><rect x="0.600" y="0.600" width="14.800" height="14.800" rx="1.800" fill="#1f2329" stroke="#2f9bea" stroke-width="1.300"/><path d="M6.600 4 H4.200 V12 H6.600 M9.400 4 H11.800 V12 H9.400" fill="none" stroke="#fff" stroke-width="1.500"/></svg>
<svg class="a" style="left:453px;top:744px" width="18" height="17" viewBox="0 0 18 17"><path d="M14.800 9.800 H6 Q6.300 12.300 9 12.300 Q10.600 12.300 11.300 11.300 H14.600 Q13.300 15.200 8.900 15.200 Q3 15.200 2.900 9 Q3.200 3.200 9 3.200 Q15 3.400 14.800 9.800z M6.100 7.600 H11.600 Q11.300 5.600 8.900 5.600 Q6.500 5.600 6.100 7.600z" fill="#36a8ee"/><path d="M1.500 15.500 Q-1.500 12 6 5 Q12 0 16.500 1.200 Q18.500 2.200 16 6" fill="none" stroke="#f4b718" stroke-width="1.300"/></svg>
<svg class="a" style="left:491px;top:745px" width="16" height="16" viewBox="0 0 16 16"><circle cx="8" cy="8" r="8" fill="#1e7fd8"/><path d="M2 4 Q6-1.500 12.500 1.500 Q16 4 15.800 8.500 Q13 10.500 9.500 9.300 Q10.500 5 6.500 4.500 Q4 4.500 2 6z" fill="#3cc38c"/><path d="M8 0 Q14 0 16 6 Q16 9 13 10 Q10 10.500 9.300 8.500 Q10.800 4.500 6.500 4.300 Q10 1 14 4 Q11 0 8 0z" fill="#4fd08a" opacity=".6"/><path d="M6.500 8 Q4.500 12.500 9.500 14.500 Q12.500 15 15 12 Q12 17 6 15.500 Q0.500 13 1 7 Q3 3.500 6.500 4.500 Q9.500 5.500 6.500 8z" fill="#1257b8"/><path d="M9 9.500 Q10 12 13 11.500 Q15.500 10.800 16 8.500 Q13 10.200 9.800 8z" fill="#1f1f1f"/></svg>
<svg class="a" style="left:528px;top:745px" width="16" height="16" viewBox="0 0 16 16"><circle cx="8" cy="8" r="8" fill="#f4f4f4"/><path d="M4 3.500 L8 8.300 L12 3.500 M8 8.300 V14" fill="none" stroke="#e8171f" stroke-width="1.900"/></svg>
<svg class="a" style="left:565px;top:745px" width="16" height="16" viewBox="0 0 16 16"><path d="M11.500 0.300 L15.700 2.300 V13.700 L11.500 15.700 L4.300 9.400 L1.700 11.600 L0.300 10.900 V5.100 L1.700 4.400 L4.300 6.600z M11.500 4.600 L7.400 8 L11.500 11.400z M1.900 6.400 V9.600 L3.600 8z" fill="#8a55d8" fill-rule="evenodd"/><path d="M11.500 0.300 L15.700 2.300 V13.700 L11.500 15.700z" fill="#a97cf0"/></svg>
<svg class="a" style="left:602px;top:744px" width="17" height="17" viewBox="0 0 17 17"><defs><linearGradient id="ffg" x1="0" y1="0" x2="0" y2="1"><stop offset="0" stop-color="#ffd43a"/><stop offset=".45" stop-color="#ff8a1f"/><stop offset="1" stop-color="#f4214f"/></linearGradient></defs><path d="M8.500 1 Q10 0 10.500 0.300 Q11 3 14 5.500 Q16.800 9 15.500 12.500 Q13.500 16.800 8.500 16.800 Q3 16.800 1 12 Q0 8.500 2 5.500 Q2.500 6.500 3 6.500 Q4 3 8.500 1z" fill="url(#ffg)"/><circle cx="8.800" cy="9.600" r="3.400" fill="#8b3fd9"/><path d="M4.500 7 Q7 5 10.500 6.500 Q7 7 6.500 9.500 Q5 9 4.500 7z" fill="#ffb52a"/><circle cx="9.300" cy="10" r="1.700" fill="#5b2bb0"/></svg>
<svg class="a" style="left:639px;top:745px" width="16" height="16" viewBox="0 0 16 16"><path d="M1 1 H4 M1 1 V4 M15 1 H12 M15 1 V4 M1 15 H4 M1 15 V12" fill="none" stroke="#3fb950" stroke-width="1.200"/><path d="M3 3.500 Q3 2 6.500 2 Q10 2 10 3.500 V10 Q10 11.500 6.500 11.500 Q3 11.500 3 10z" fill="#f2c12e"/><ellipse cx="6.500" cy="3.500" rx="3.500" ry="1.400" fill="#fbe08a"/><path d="M7.500 8.500 L14 15 M14 8.500 L7.500 15" stroke="#2f86d6" stroke-width="1.700"/></svg>
<svg class="a" style="left:676px;top:745px" width="16" height="16" viewBox="0 0 16 16"><circle cx="8" cy="8" r="8" fill="#db4437"/><path d="M8 8 L1.070 4 A8 8 0 0 0 6.500 15.860z" fill="#0f9d58" transform="rotate(0 8 8)"/><path d="M8 8 L6.500 15.860 A8 8 0 0 0 14.930 4 L8 4z" fill="#ffcd40"/><path d="M1.070 4 A8 8 0 0 1 14.930 4 L8 4z" fill="#db4437"/><path d="M8 8 L1.070 4 L3 9 L6.500 15.860 A8 8 0 0 1 1.070 4z" fill="#0f9d58"/><circle cx="8" cy="8" r="3.700" fill="#f1f1f1"/><circle cx="8" cy="8" r="2.900" fill="#4285f4"/></svg>
<svg class="a" style="left:713px;top:745px" width="16" height="16" viewBox="0 0 16 16"><path d="M11.500 0.300 L15.700 2.300 V13.700 L11.500 15.700 L4.300 9.400 L1.700 11.600 L0.300 10.900 V5.100 L1.700 4.400 L4.300 6.600z M11.500 4.600 L7.400 8 L11.500 11.400z M1.900 6.400 V9.600 L3.600 8z" fill="#8a55d8" fill-rule="evenodd"/><path d="M11.500 0.300 L15.700 2.300 V13.700 L11.500 15.700z" fill="#a97cf0"/></svg>
<svg class="a" style="left:749px;top:744px" width="18" height="18" viewBox="0 0 18 18"><path d="M12 0.500 Q12.500 5 9 8.500 Q5 13 0.500 15.500 Q6 14.500 10 10 Q13.500 5.500 12 0.500z" fill="#2f9be6"/><path d="M4 3.500 Q7 5 9.500 8.500 Q12 12 16 13.500 Q11 13.500 8 9.500 Q6 6 4 3.500z" fill="#1670c4"/></svg>
<svg class="a" style="left:786px;top:743px" width="18" height="18" viewBox="0 0 18 18"><path d="M8 4 Q14 4 14.500 9 Q14.500 12 11.500 11.500 Q9.500 11.300 9.800 13 Q10 15.500 6.500 15.500 Q1 15 1 10 Q1.500 4.500 8 4z" fill="#f2f4f7"/><circle cx="4" cy="10" r="1.300" fill="#e03a2f"/><circle cx="6" cy="7" r="1.300" fill="#2fa84f"/><circle cx="9.500" cy="6.800" r="1.300" fill="#f2b21d"/><circle cx="5.500" cy="13" r="1.200" fill="#2f78d6"/><path d="M13.500 3 L14.500 3 L14.500 14.500 Q14 15.800 13.500 14.500z" fill="#f08a24"/><path d="M13 0.500 H15 L14.800 3.500 H13.200z" fill="#e8b878"/></svg>
<svg class="a" style="left:824px;top:745px" width="17" height="16" viewBox="0 0 17 16"><path d="M7.500 1.500 Q13 1.500 14 7 Q14.500 13 8.500 14.500 Q4 15 2 11 H6 Q8 13 10 11 Q11 9.500 10 8.500 H1.500 Q1.500 2 7.500 1.500z" fill="#17428f"/><path d="M3 6.800 H9.500 Q8.500 4.500 6.300 4.500 Q4 4.500 3 6.800z" fill="#474747"/><path d="M11 1 L12.300 2.800 L14.500 0.500 L14 3.500 L16.500 4.200 L13.800 5 L14 7.500 L12.200 5.500 L10 6.500 L11.200 4z" fill="#fff"/></svg>
<svg class="a" style="left:971px;top:744px" width="22" height="19" viewBox="0 0 22 19"><path d="M5 12 Q0.500 12 0.500 8.500 Q0.700 5.500 4 5.300 Q5 1 9.500 1 Q13 1 14.500 4 Q18 3 19.500 6 Q21.500 6.300 21.500 9 Q21.500 12 18 12z" fill="#dfe9f5"/><path d="M4 5.500 Q5 1 9.500 1 Q12 1 13.500 2.500 Q9 3 7.500 7 Q5.500 5.500 4 5.500z" fill="#f7fafd"/><path d="M7 13.200 C8.800 15.800 8.800 18.400 7 18.400 C5.200 18.400 5.200 15.800 7 13.200z M11.300 8.600 C12.700 10.600 12.700 12.400 11.300 12.400 C9.900 12.400 9.900 10.600 11.300 8.600z M16 11.800 C17.800 14.400 17.800 17 16 17 C14.200 17 14.200 14.400 16 11.800z" fill="#3b8fe8"/></svg>
<span class="t" style="left:1004px;top:746.33px;font-size:14px;color:#fff;transform-origin:0 0;transform:scaleX(0.8697);">18...</span>
<svg class="a" style="left:1040px;top:745px" width="13" height="16" viewBox="0 0 13 16"><path d="M6.500 0 L13 2.500 V9 Q12.500 13 6.500 16 Q0.500 13 0 9 V2.500z" fill="#0f9f86"/><path d="M6.500 0 L13 2.500 V9 Q12.500 13 6.500 16z" fill="#0b8872"/><path d="M3.500 8 L5.800 10.300 L9.800 5.800" fill="none" stroke="#fff" stroke-width="1.400"/></svg>
<svg class="a" style="left:1064px;top:745px" width="13" height="16" viewBox="0 0 13 16"><path d="M2 5 Q6.500 0 11 5 M3.800 6.800 Q6.500 3.800 9.200 6.800" fill="none" stroke="#fff" stroke-width="1.200"/><path d="M4.500 9.500 V8 Q6.500 5.800 8.500 8 V9.500" fill="none" stroke="#fff" stroke-width="1.100"/><rect x="1" y="9.500" width="11" height="6" fill="#fff"/><path d="M3.500 12 v1.500 M6.500 12 v1.500 M9.500 12 v1.500" stroke="#1f1f1f" stroke-width="1"/></svg>
<svg class="a" style="left:1088px;top:745px" width="13" height="16" viewBox="0 0 13 16"><path d="M2 2 Q6 0 10 2 M2 14 Q6 16 10 14" fill="none" stroke="#fff" stroke-width="1.100"/><rect x="0.700" y="4.200" width="7.600" height="7.600" rx="1.800" fill="none" stroke="#fff" stroke-width="1.300"/><path d="M8.600 7 L11.500 5.300 V10.700 L8.600 9z" fill="none" stroke="#fff" stroke-width="1.200"/></svg>
<svg class="a" style="left:1110px;top:745px" width="16" height="15" viewBox="0 0 16 15"><rect width="16" height="15" rx="1" fill="#f2701c"/><rect x="0" y="0" width="16" height="15" rx="1" fill="none" stroke="#c8500f" stroke-width="1"/><path d="M8.500 2.500 L10.500 4 L7.500 8.500 L6 7.500z" fill="#fff"/><path d="M3 9.500 H10 Q13 9.700 12.500 11.500 H5" fill="none" stroke="#fff" stroke-width="1.300"/><path d="M3 12.800 H12" stroke="#fff" stroke-width="1"/></svg>
<svg class="a" style="left:1134px;top:745px" width="16" height="16" viewBox="0 0 16 16"><rect width="16" height="16" rx="1.500" fill="#2f98e0"/><path d="M0 12 L5 16 H0z" fill="#f2a63a"/><path d="M0 13 Q4 10 8 14 L7 16 H0z" fill="#f0b24e" opacity=".8"/><rect x="4" y="3" width="8" height="5.500" fill="none" stroke="#d9ecfb" stroke-width="1"/><path d="M5.500 5 h5 M5.500 6.800 h5 M8 8.500 v2 M4.500 11 h6 M11 10.500 q2 0 2 1.500 q0 1.500-2 1.500" fill="none" stroke="#d9ecfb" stroke-width=".9"/><circle cx="11" cy="12" r="1.600" fill="none" stroke="#d9ecfb" stroke-width=".9"/></svg>
<svg class="a" style="left:1160px;top:746px" width="15" height="15" viewBox="0 0 15 15"><path d="M1 14 A13 13 0 0 1 14 1 M4.500 14 A9.500 9.500 0 0 1 14 4.500 M8 14 A6 6 0 0 1 14 8" fill="none" stroke="#fff" stroke-width="1.500"/><circle cx="12.500" cy="12.500" r="1.800" fill="#fff"/></svg>
<svg class="a" style="left:1183px;top:745px" width="15" height="15" viewBox="0 0 15 15"><rect width="15" height="15" fill="#2b3446"/><rect x="1" y="3" width="13" height="9" fill="#76b900"/><path d="M2.500 7.500 Q5 4.500 8 5 Q11 5.500 12.500 7.500 Q10.500 10.500 7.500 10.300 Q4.500 10 2.500 7.500z" fill="none" stroke="#2b3446" stroke-width="1"/><circle cx="7.300" cy="7.600" r="1.500" fill="#2b3446"/></svg>
<svg class="a" style="left:1205px;top:747px" width="18" height="12" viewBox="0 0 18 12"><path d="M2 0 V2.500 M4.500 0 V2.500" stroke="#fff" stroke-width="1.100"/><path d="M0.800 2.500 H5.700 V4.500 Q5.700 6.500 3.250 6.500 Q0.800 6.500 0.800 4.500z" fill="#fff"/><path d="M3.250 6.500 V9.500 H5" fill="none" stroke="#fff" stroke-width="1.100"/><rect x="5.600" y="2.600" width="10.300" height="7.800" fill="none" stroke="#fff" stroke-width="1.200"/><rect x="16.300" y="5" width="1.400" height="3" fill="#fff"/></svg>
<svg class="a" style="left:1230px;top:745px" width="17" height="17" viewBox="0 0 17 17"><path d="M7.500 0 Q11 2 15 2 V8 Q14 13 7.500 15.500 Q1 13 0 8 V2 Q4 2 7.500 0z" fill="#fff"/><path d="M7.500 0 V15.500 M0 7 H15" stroke="#1f1f1f" stroke-width="1.200"/><circle cx="12" cy="12" r="4.300" fill="#1fa24a"/><path d="M9.800 12 L11.400 13.600 L14.200 10.600" fill="none" stroke="#fff" stroke-width="1.300"/></svg>
<svg class="a" style="left:1253px;top:746px" width="22" height="14" viewBox="0 0 22 14"><path d="M0.700 4.500 H3.500 L7 1 V13 L3.500 9.500 H0.700z" fill="none" stroke="#fff" stroke-width="1.200"/><path d="M10 4.500 L15 9.500 M15 4.500 L10 9.500" stroke="#fff" stroke-width="1.200"/></svg>
<span class="t" style="left:1281px;top:746.14px;font-size:12px;color:#fff;transform-origin:0 0;transform:scaleX(0.8819);">11:56</span>
<svg class="a" style="left:1324px;top:745px" width="19" height="17" viewBox="0 0 19 17"><path d="M0 0 H16 V12 H8 L5 15 V12 H0z" fill="#fff"/><path d="M3 3.500 H13 M3 6 H13 M3 8.500 H9" stroke="#1f1f1f" stroke-width="1.100"/><circle cx="14" cy="12" r="3.200" fill="#1f1f1f"/><path d="M15.500 9.800 A2.600 2.600 0 1 0 16.600 13 A2 2 0 0 1 15.500 9.800z" fill="#fff"/></svg>
<div class="a" style="left:1361px;top:738px;width:1px;height:30px;background:#5a5a5a"></div>
</body></html>
